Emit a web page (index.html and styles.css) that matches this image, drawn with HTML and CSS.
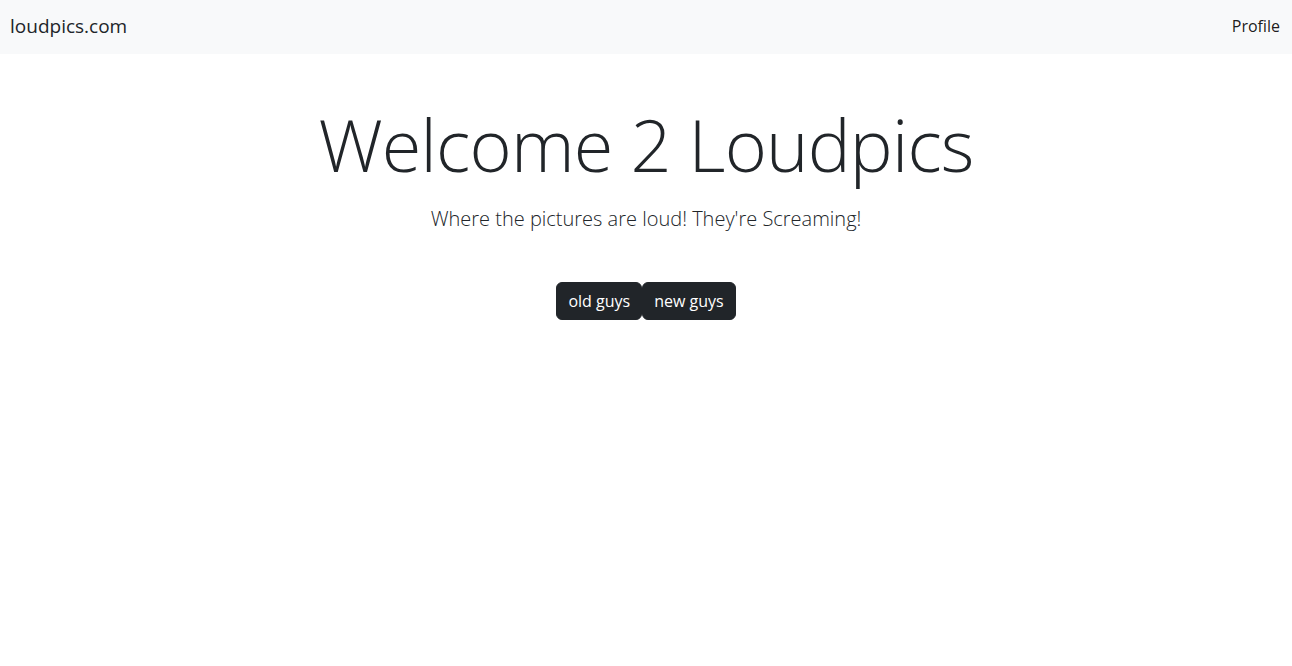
FILE: index.html
```html
<!DOCTYPE html>
<html lang="en">
<head>
<meta charset="utf-8">
<title>loudpics.com</title>
<link rel="stylesheet" href="styles.css">
</head>
<body>
<nav class="navbar">
  <a class="brand" href="#">loudpics.com</a>
  <a class="nav-link" href="#">Profile</a>
</nav>
<main class="hero">
  <h1 class="display">Welcome 2 Loudpics</h1>
  <p class="lead">Where the pictures are loud! They're Screaming!</p>
  <div class="actions">
    <button class="btn">old guys</button>
    <button class="btn">new guys</button>
  </div>
</main>
</body>
</html>
```

FILE: styles.css
```css
* { box-sizing: border-box; }
html, body { margin: 0; padding: 0; }
body {
  font-family: "Open Sans", "Noto Sans", sans-serif;
  color: #212529;
  background: #fff;
  font-size: 16px;
  line-height: 1.5;
}
.navbar {
  height: 54px;
  background: #f8f9fa;
  display: flex;
  align-items: center;
  justify-content: space-between;
  padding: 0 12px 2px 10px;
}
.brand {
  font-size: 19px;
  color: #212529;
  text-decoration: none;
}
.nav-link {
  font-size: 16px;
  color: rgba(0,0,0,.9);
  text-decoration: none;
}
.hero {
  display: flex;
  flex-direction: column;
  align-items: center;
  padding-top: 42px;
}
.display {
  margin: 0;
  font-size: 72px;
  font-weight: 300;
  line-height: 96px;
  letter-spacing: -0.8px;
}
.lead {
  margin: 12px 0 0;
  font-size: 20px;
  font-weight: 300;
  line-height: 30px;
}
.actions {
  display: flex;
  margin-top: 48px;
}
.btn {
  font-family: inherit;
  font-size: 16px;
  line-height: 24px;
  padding: 6px 11px;
  color: #fff;
  background: #212529;
  border: 1px solid #212529;
  border-radius: 6px;
  cursor: pointer;
}
```
